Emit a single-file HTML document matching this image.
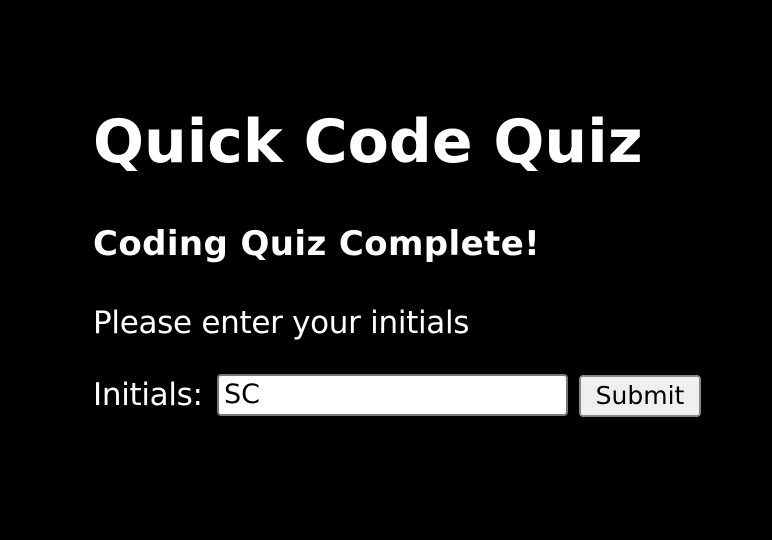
<!DOCTYPE html>
<html><head><style>
body{margin:0;background:#000;width:772px;height:540px;overflow:hidden;font-family:"DejaVu Sans","Liberation Sans",sans-serif;color:#fff;}
h1{position:absolute;left:93px;top:104px;margin:0;font-size:60px;font-weight:bold;letter-spacing:0px;line-height:76px;}
h2{position:absolute;left:93px;top:222px;margin:0;font-size:34px;font-weight:bold;line-height:44px;letter-spacing:0.4px;}
.p{position:absolute;left:93px;top:303px;font-size:31px;line-height:40px;letter-spacing:-0.3px;}
.l{position:absolute;left:93px;top:375px;font-size:31px;line-height:40px;letter-spacing:-0.3px;}
.in{position:absolute;left:217px;top:374px;height:38px;background:#fff;border:2px solid #777;border-radius:4px;color:#000;font-size:27px;line-height:38px;padding-left:5px;width:342px;}
.btn{position:absolute;left:579px;top:375px;width:118px;height:38px;background:#efefef;border:2px solid #888;border-radius:4px;color:#000;font-size:25px;line-height:38px;text-align:center;}
</style></head><body>
<h1>Quick Code Quiz</h1>
<h2>Coding Quiz Complete!</h2>
<div class="p">Please enter your initials</div>
<div class="l">Initials:</div>
<div class="in">SC</div>
<div class="btn">Submit</div>
</body></html>
